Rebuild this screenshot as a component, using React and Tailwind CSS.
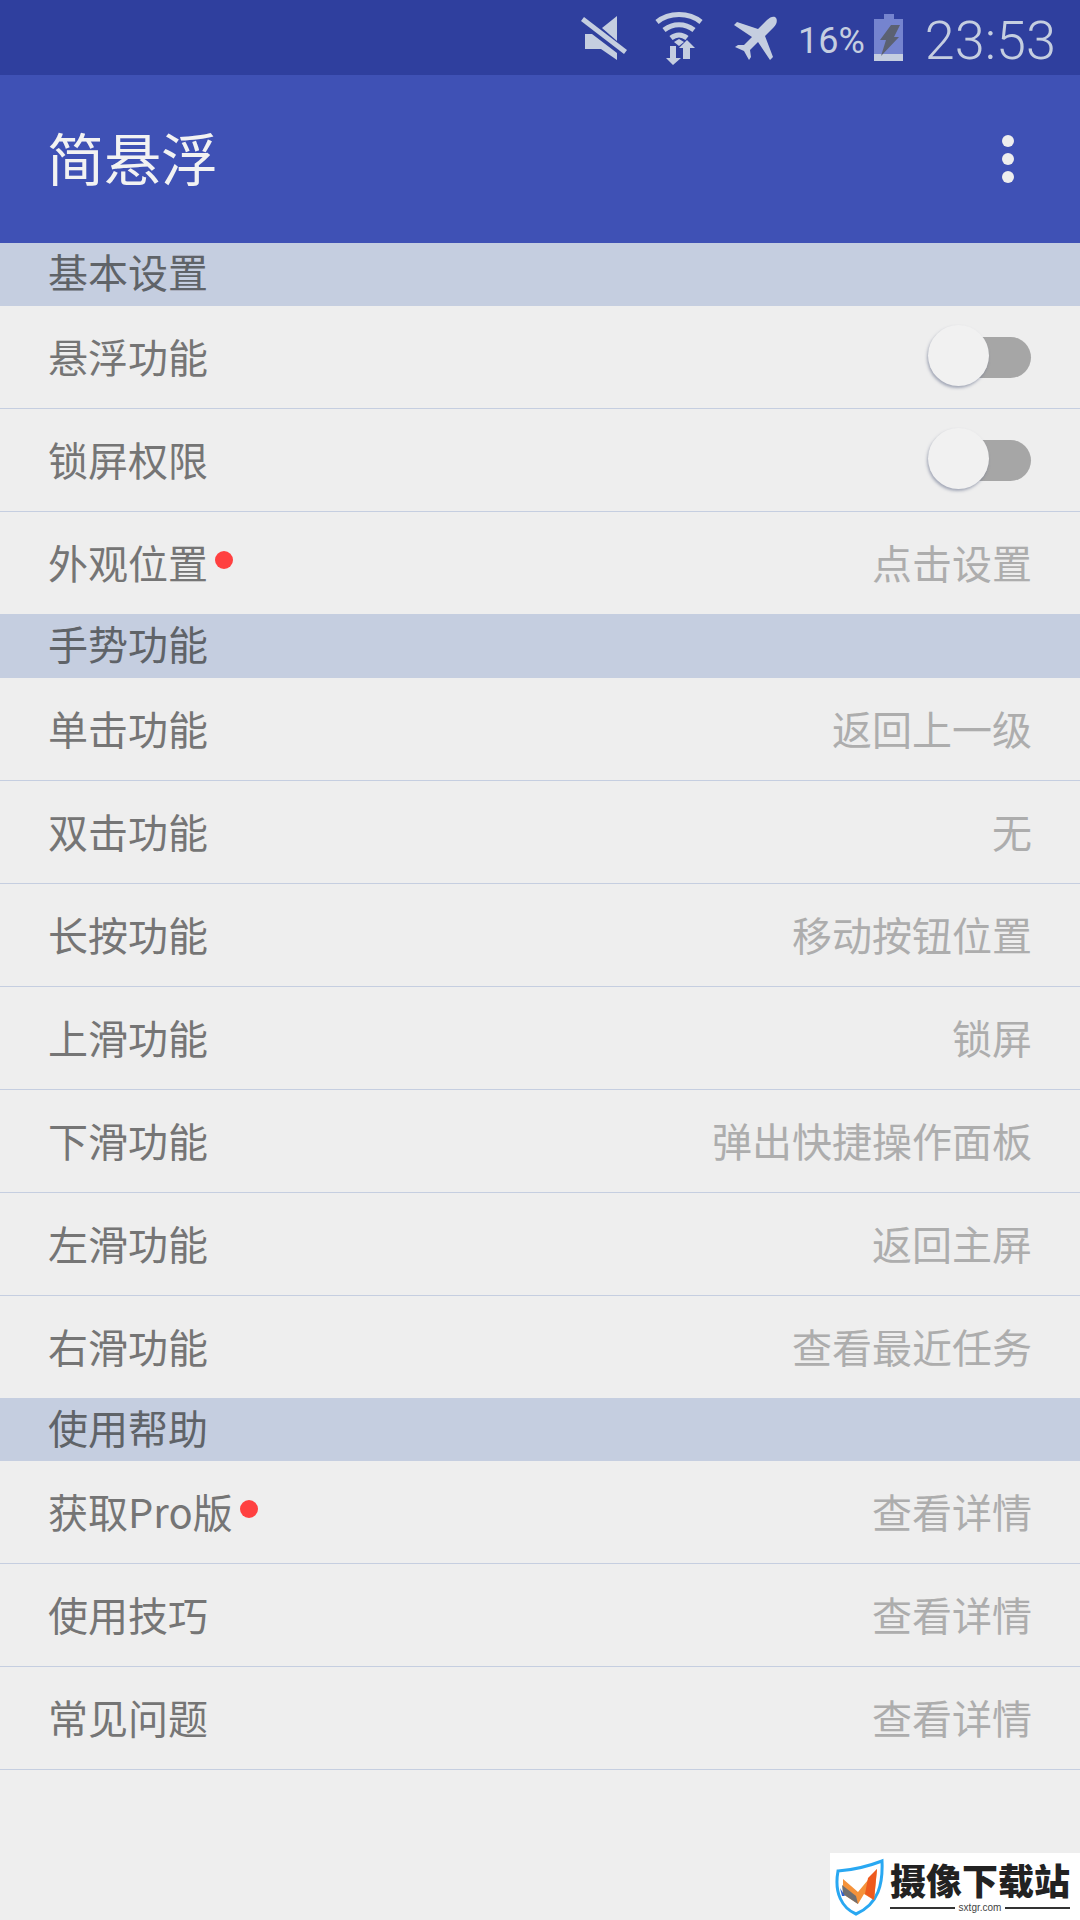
const fontStack = { fontFamily: '"Noto Sans CJK SC", Roboto, sans-serif' };

const MuteIcon = () => (
  <svg width="46" height="46" viewBox="0 0 46 46" fill="#c5cee0">
    <path d="M4 19 L11 19 L36 38 L36 45 L20 34 L4 34 Z" />
    <path d="M21 13 L36 1 L36 26 Z" />
    <path d="M0 6 L3 2 L46 35 L43 39 Z" />
  </svg>
);

const WifiIcon = () => (
  <svg width="50" height="56" viewBox="0 0 50 56" fill="none">
    <path d="M3 12 C15 2 35 2 47 12" stroke="#c5cee0" strokeWidth="5" />
    <path d="M10 20 C19 13 31 13 40 20" stroke="#c5cee0" strokeWidth="5" />
    <path d="M17 28 C22 24 28 24 33 28" stroke="#c5cee0" strokeWidth="5" />
    <path d="M20 32 L25 29 L30 32 L25 36 Z" fill="#c5cee0" />
    <path d="M16 36 L22 36 L22 48 L27 48 L19 55 L12 48 L16 48 Z" fill="#c5cee0" />
    <path d="M29 49 L29 38 L25 38 L33 30 L41 38 L36 38 L36 49 Z" fill="#c5cee0" />
  </svg>
);

const PlaneIcon = () => (
  <svg width="44" height="44" viewBox="0 0 44 44" fill="#c5cee0">
    <path d="M41 1 C44 3 43 8 40 11 L31 20 L39 41 L36 44 L24 26 L16 34 L17 41 L15 44 L10 35 L1 31 L4 29 L10 29 L18 21 L0 9 L3 6 L24 13 L33 4 C36 1 39 0 41 1 Z" />
  </svg>
);

const BatteryIcon = () => (
  <svg width="30" height="48" viewBox="0 0 30 48">
    <path d="M10 0 H20 V5 H29 V47 H0 V5 H10 Z" fill="#7584cf" />
    <rect x="0" y="40" width="29" height="7" fill="#c5cee0" />
    <path d="M17 11 H26 L20 23 H25 L7 42 L12 26 H6 Z" fill="#5b6172" />
  </svg>
);

const Toggle = () => (
  <div className="relative mr-px mt-0.5 h-[41px] w-[103px] shrink-0">
    <div className="absolute right-0 top-0 h-[41px] w-[70px] rounded-full bg-[#a6a6a6]" />
    <div className="absolute left-0 top-[-12px] h-[61px] w-[61px] rounded-full bg-[#f1f1f1] shadow-[-1px_2px_3px_rgba(90,100,130,0.5)]" />
  </div>
);

const Logo = () => (
  <svg width="50" height="58" viewBox="0 0 50 58" fill="none">
    <path d="M4 13 C20 12 35 8 48 3 C49 25 45 46 22 56 C8 50 0 35 4 13 Z" stroke="#29a8f2" strokeWidth="3" fill="#fff" />
    <path d="M9 21 L24 34 L43 11 L40 42 L30 36 L24 46 L9 36 Z" fill="#f5923a" />
    <path d="M34 20 L43 11 L40 42 L31 36 Z" fill="#ee5a1d" />
    <path d="M8 27 L22 38 L24 46 L9 36 Z" fill="#6f6f72" />
    <path d="M6 30 L11 38 L8 38 Z" fill="#2a5fd0" />
  </svg>
);

const Section = ({ title, short }) => (
  <div className={`flex items-center bg-[#c5cee0] px-12 pb-[7px] text-[40px] leading-none text-[#5f6368] ${short ? 'h-[62px]' : 'h-[63px]'}`}>
    {title}
  </div>
);

const Row = ({ label, value, dot, toggle }) => (
  <div className="flex h-[103px] items-center justify-between border-b border-[#c5cee0] px-12 pb-0.5 text-[40px] leading-none">
    <div className="flex items-center text-[#757575]">
      <span>{label}</span>
      {dot && <span className="mb-1 ml-[7px] h-[18px] w-[18px] rounded-full bg-[#ff4040]" />}
    </div>
    {toggle ? <Toggle /> : <span className="text-[#adadad]">{value}</span>}
  </div>
);

export default function App() {
  return (
    <div className="relative h-[1920px] w-[1080px] overflow-hidden bg-[#eeeeee]" style={fontStack}>
      {/* Status bar */}
      <div className="flex h-[75px] items-center justify-end bg-[#2f3f9e] pr-6 text-[#c5cee0]">
        <div className="mr-[27px]"><MuteIcon /></div>
        <div className="mr-[30px]"><WifiIcon /></div>
        <div className="mr-5"><PlaneIcon /></div>
        <span className="mr-[9px] mt-1.5 font-['Roboto'] text-[36px] leading-none">16%</span>
        <div className="mr-[21px]"><BatteryIcon /></div>
        <span className="mt-1.5 font-['Roboto'] text-[54px] font-light leading-none">23:53</span>
      </div>

      {/* Toolbar */}
      <div className="flex h-[168px] items-center justify-between bg-[#3f51b5] pl-[47px] pr-[66px]">
        <span className="pb-1.5 text-[57px] leading-none text-[#f2f2f2]">简悬浮</span>
        <div className="flex flex-col gap-1.5">
          <span className="h-3 w-3 rounded-full bg-[#eeeeee]" />
          <span className="h-3 w-3 rounded-full bg-[#eeeeee]" />
          <span className="h-3 w-3 rounded-full bg-[#eeeeee]" />
        </div>
      </div>

      <Section title="基本设置" />
      <Row label="悬浮功能" toggle />
      <Row label="锁屏权限" toggle />
      <Row label="外观位置" value="点击设置" dot />

      <Section title="手势功能" />
      <Row label="单击功能" value="返回上一级" />
      <Row label="双击功能" value="无" />
      <Row label="长按功能" value="移动按钮位置" />
      <Row label="上滑功能" value="锁屏" />
      <Row label="下滑功能" value="弹出快捷操作面板" />
      <Row label="左滑功能" value="返回主屏" />
      <Row label="右滑功能" value="查看最近任务" />

      <Section title="使用帮助" short />
      <Row label="获取Pro版" value="查看详情" dot />
      <Row label="使用技巧" value="查看详情" />
      <Row label="常见问题" value="查看详情" />

      {/* Watermark */}
      <div className="absolute bottom-0 right-0 flex h-[67px] w-[250px] items-center bg-white pl-1">
        <Logo />
        <div className="ml-1.5 flex flex-col">
          <span className="text-[36px] font-black leading-[38px] text-[#222222]" style={{ fontFamily: '"Noto Sans CJK SC", serif' }}>摄像下载站</span>
          <div className="mt-1 flex items-center gap-1">
            <span className="h-0.5 flex-1 bg-[#333333]" />
            <span className="font-['Liberation_Sans'] text-[10px] leading-3 text-[#444444]">sxtgr.com</span>
            <span className="h-0.5 flex-1 bg-[#333333]" />
          </div>
        </div>
      </div>
    </div>
  );
}
